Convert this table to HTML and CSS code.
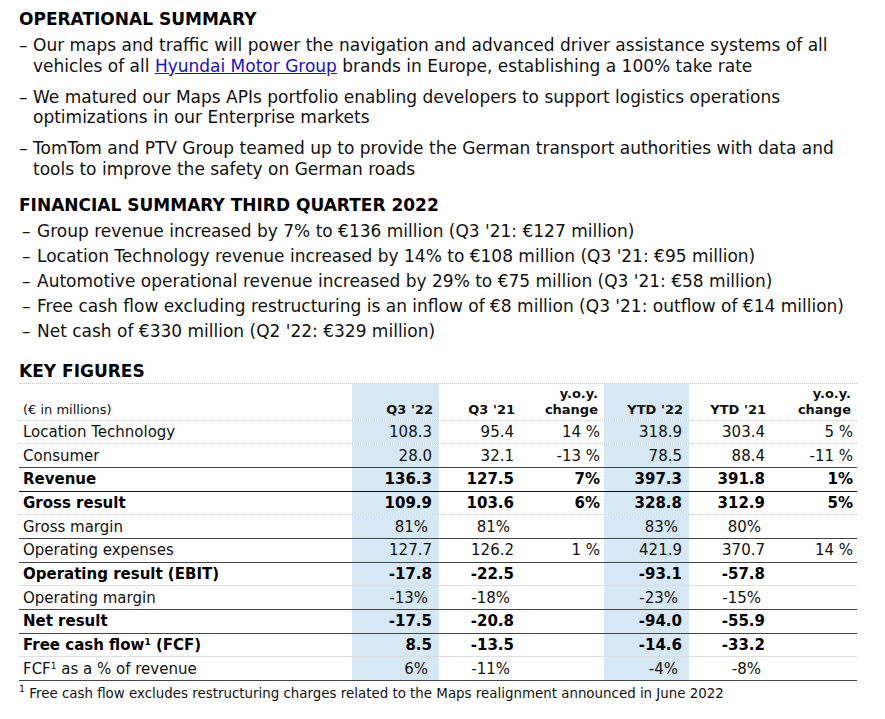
FILE: index.html
```html
<!DOCTYPE html>
<html lang="en">
<head>
<meta charset="utf-8">
<title>TomTom Q3 2022</title>
<link rel="stylesheet" href="styles.css">
</head>
<body>
<section class="ops">
  <h2 class="h-ops">OPERATIONAL SUMMARY</h2>
  <ul class="ops-list">
    <li><span class="dash">–</span><span>Our maps and traffic will power the navigation and advanced driver assistance systems of all vehicles of all <a href="#">Hyundai Motor Group</a> brands in Europe, establishing a 100% take rate</span></li>
    <li><span class="dash">–</span><span>We matured our Maps APIs portfolio enabling developers to support logistics operations optimizations in our Enterprise markets</span></li>
    <li><span class="dash">–</span><span>TomTom and PTV Group teamed up to provide the German transport authorities with data and tools to improve the safety on German roads</span></li>
  </ul>
</section>
<section class="fin">
  <h2 class="h-fin">FINANCIAL SUMMARY THIRD QUARTER 2022</h2>
  <ul class="fin-list">
    <li><span class="dash">–</span><span>Group revenue increased by 7% to €136 million (Q3 '21: €127 million)</span></li>
    <li><span class="dash">–</span><span>Location Technology revenue increased by 14% to €108 million (Q3 '21: €95 million)</span></li>
    <li><span class="dash">–</span><span>Automotive operational revenue increased by 29% to €75 million (Q3 '21: €58 million)</span></li>
    <li><span class="dash">–</span><span>Free cash flow excluding restructuring is an inflow of €8 million (Q3 '21: outflow of €14 million)</span></li>
    <li><span class="dash">–</span><span>Net cash of €330 million (Q2 '22: €329 million)</span></li>
  </ul>
</section>
<section class="key">
  <h2 class="h-key">KEY FIGURES</h2>
  <div class="kf">
    <div class="row head b-dot">
      <div class="c lbl"><span>(€ in millions)</span></div>
      <div class="c n hl">Q3 '22</div>
      <div class="c n">Q3 '21</div>
      <div class="c n"><span>y.o.y.<br>change</span></div>
      <div class="c n hl">YTD '22</div>
      <div class="c n">YTD '21</div>
      <div class="c n"><span>y.o.y.<br>change</span></div>
    </div>
    <div class="row b-dot">
      <div class="c lbl">Location Technology</div>
      <div class="c n hl">108.3</div><div class="c n">95.4</div><div class="c n chg">14 %</div>
      <div class="c n hl">318.9</div><div class="c n">303.4</div><div class="c n chg">5 %</div>
    </div>
    <div class="row b-dark">
      <div class="c lbl">Consumer</div>
      <div class="c n hl">28.0</div><div class="c n">32.1</div><div class="c n chg">-13 %</div>
      <div class="c n hl">78.5</div><div class="c n">88.4</div><div class="c n chg">-11 %</div>
    </div>
    <div class="row bold b-black">
      <div class="c lbl">Revenue</div>
      <div class="c n hl">136.3</div><div class="c n">127.5</div><div class="c n chg">7%</div>
      <div class="c n hl">397.3</div><div class="c n">391.8</div><div class="c n chg">1%</div>
    </div>
    <div class="row bold b-dot">
      <div class="c lbl">Gross result</div>
      <div class="c n hl">109.9</div><div class="c n">103.6</div><div class="c n chg">6%</div>
      <div class="c n hl">328.8</div><div class="c n">312.9</div><div class="c n chg">5%</div>
    </div>
    <div class="row b-dark">
      <div class="c lbl">Gross margin</div>
      <div class="c n pct hl">81%</div><div class="c n pct">81%</div><div class="c n"></div>
      <div class="c n pct hl">83%</div><div class="c n pct">80%</div><div class="c n"></div>
    </div>
    <div class="row b-dark">
      <div class="c lbl">Operating expenses</div>
      <div class="c n hl">127.7</div><div class="c n">126.2</div><div class="c n chg">1 %</div>
      <div class="c n hl">421.9</div><div class="c n">370.7</div><div class="c n chg">14 %</div>
    </div>
    <div class="row bold b-light">
      <div class="c lbl">Operating result (EBIT)</div>
      <div class="c n hl">-17.8</div><div class="c n">-22.5</div><div class="c n"></div>
      <div class="c n hl">-93.1</div><div class="c n">-57.8</div><div class="c n"></div>
    </div>
    <div class="row b-dark">
      <div class="c lbl">Operating margin</div>
      <div class="c n pct hl">-13%</div><div class="c n pct">-18%</div><div class="c n"></div>
      <div class="c n pct hl">-23%</div><div class="c n pct">-15%</div><div class="c n"></div>
    </div>
    <div class="row bold b-dark">
      <div class="c lbl">Net result</div>
      <div class="c n hl">-17.5</div><div class="c n">-20.8</div><div class="c n"></div>
      <div class="c n hl">-94.0</div><div class="c n">-55.9</div><div class="c n"></div>
    </div>
    <div class="row bold b-light">
      <div class="c lbl"><span>Free cash flow<sup>1</sup> (FCF)</span></div>
      <div class="c n hl">8.5</div><div class="c n">-13.5</div><div class="c n"></div>
      <div class="c n hl">-14.6</div><div class="c n">-33.2</div><div class="c n"></div>
    </div>
    <div class="row b-dark">
      <div class="c lbl"><span>FCF<sup>1</sup> as a % of revenue</span></div>
      <div class="c n pct hl">6%</div><div class="c n pct">-11%</div><div class="c n"></div>
      <div class="c n pct hl">-4%</div><div class="c n pct">-8%</div><div class="c n"></div>
    </div>
  </div>
  <p class="note"><sup>1</sup> Free cash flow excludes restructuring charges related to the Maps realignment announced in June 2022</p>
</section>
</body>
</html>
```

FILE: styles.css
```css
html, body {
  margin: 0;
  padding: 0;
  background: #ffffff;
}
body {
  font-family: "DejaVu Sans", Verdana, sans-serif;
  color: #111111;
  padding: 0 28px 0 19px;
}
h2 {
  margin: 0;
  font-weight: bold;
  color: #000;
}
ul {
  list-style: none;
  margin: 0;
  padding: 0;
}
li {
  display: flex;
}
.h-ops {
  font-size: 17px;
  line-height: 20px;
  padding-top: 9px;
}
.ops-list {
  font-size: 17px;
  line-height: 20.5px;
  margin-top: 6px;
}
.ops-list li {
  margin-bottom: 10.5px;
}
.ops-list .dash {
  flex: 0 0 14px;
}
.ops-list a {
  color: #1a0dcc;
  text-decoration: underline;
}
.h-fin {
  font-size: 17px;
  line-height: 20px;
  margin-top: 15.5px;
}
.fin-list {
  font-size: 17px;
  line-height: 25px;
  margin-top: 4.5px;
}
.fin-list .dash {
  flex: 0 0 15px;
  padding-left: 3px;
}
.h-key {
  font-size: 17px;
  line-height: 20px;
  margin-top: 16.5px;
}
.kf {
  margin-top: 2px;
  border-top: 1px dotted #c8c8c8;
  width: 838px;
  font-size: 15px;
}
.row {
  display: grid;
  grid-template-columns: 333px 87px 82px 83px 85px 83px 85px;
  height: 23.7px;
  box-sizing: border-box;
}
.row.head {
  height: 37px;
  font-size: 13px;
  font-weight: bold;
  line-height: 16px;
}
.row.head .c {
  align-items: flex-end;
  padding-bottom: 2px;
}
.row.head .lbl {
  font-weight: normal;
  padding-left: 4px;
}
.row.head .n {
  padding-right: 6px;
}
.c {
  display: flex;
  align-items: center;
  white-space: nowrap;
}
.lbl {
  padding-left: 4px;
}
.n {
  justify-content: flex-end;
  text-align: right;
  padding-right: 7px;
}
.n.chg {
  padding-right: 4px;
}
.n.pct {
  padding-right: 11px;
}
.hl {
  background: #d6e8f4;
}
.bold {
  font-weight: bold;
  color: #000;
}
.b-dot { border-bottom: 1px dotted #c8c8c8; }
.b-light { border-bottom: 1px solid #dedede; }
.b-dark { border-bottom: 1px solid #444444; }
.b-black { border-bottom: 1px solid #111111; }
sup {
  font-size: 0.6em;
  line-height: 0;
  vertical-align: 0.6em;
}
.note {
  margin: 4px 0 0 0;
  font-size: 13.4px;
  line-height: 18px;
}
.note sup {
  font-size: 0.7em;
}
```
